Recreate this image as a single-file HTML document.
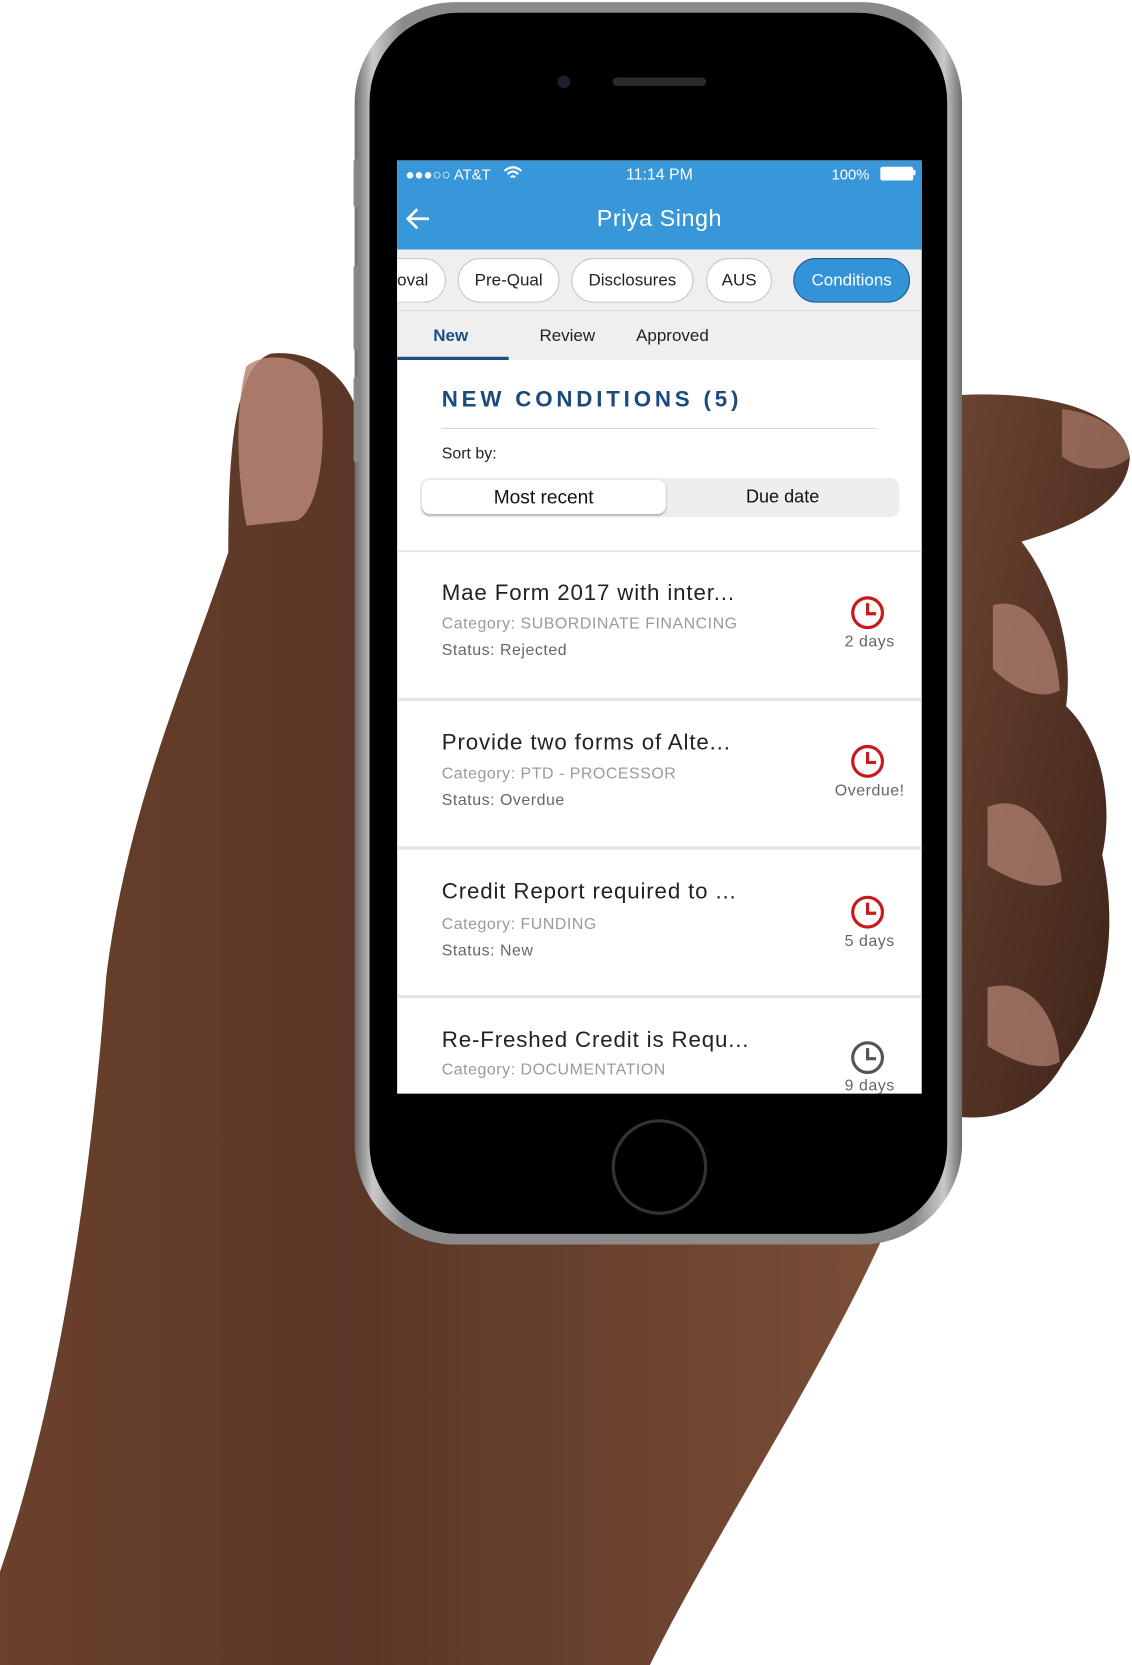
<!DOCTYPE html>
<html><head><meta charset="utf-8">
<style>
html,body{margin:0;padding:0;background:#fff;width:1132px;height:1665px;overflow:hidden}
#w{position:absolute;left:0;top:0;width:1066px;height:1568px;transform:scale(1.0619);transform-origin:0 0;font-family:"Liberation Sans",sans-serif}
.a{position:absolute}
.chip{position:absolute;top:243px;height:42px;border:1px solid #c8c8c8;border-radius:22px;background:#fff;font-size:16px;color:#222;line-height:42px;text-align:center;box-sizing:border-box}
.t{position:absolute;left:416px;font-size:21px;color:#222;letter-spacing:0.8px}
.c{position:absolute;left:416px;font-size:15px;color:#9a9a9a;letter-spacing:0.5px}
.s{position:absolute;left:416px;font-size:15px;color:#666;letter-spacing:0.5px}
.d{position:absolute;font-size:15px;color:#666;width:100px;text-align:center;left:769px;letter-spacing:0.5px}
.sep{position:absolute;left:374px;width:494px;height:3px;background:#e4e4e4}
</style></head><body><div id="w">
<svg class="a" style="left:0;top:0" width="1066" height="1568">
<defs>
<linearGradient id="g1" x1="0" y1="0" x2="1" y2="0">
<stop offset="0" stop-color="#6a412c"/><stop offset="0.4" stop-color="#5b3626"/><stop offset="1" stop-color="#7a4e37"/></linearGradient>
<linearGradient id="g2" x1="0" y1="0" x2="1" y2="1">
<stop offset="0" stop-color="#6b4330"/><stop offset="1" stop-color="#3c2218"/></linearGradient>
</defs>
<path d="M255 333 C300 328 340 360 342 420 L342 1100 L420 1168 L830 1168 C770 1300 670 1450 612 1568 L0 1568 L0 1480 C55 1320 85 1120 100 920 C120 760 175 640 215 520 C215 430 220 345 255 333 Z" fill="url(#g1)"/>
<path d="M232 345 C250 330 290 335 300 360 C310 420 300 480 280 490 L232 495 C222 440 222 380 232 345 Z" fill="#b68676" opacity="0.85"/>
<path d="M905 372 C980 368 1058 385 1064 430 C1062 480 995 500 962 510 C1000 560 1010 620 1004 665 C1040 700 1048 760 1038 805 C1050 860 1050 940 1002 1000 C980 1040 945 1055 905 1052 Z" fill="url(#g2)"/>
<path d="M935 570 C970 560 995 600 998 650 C980 660 955 650 935 630 Z" fill="#b58676" opacity="0.7"/>
<path d="M930 760 C965 745 995 780 1000 830 C980 840 955 830 930 815 Z" fill="#b58676" opacity="0.7"/>
<path d="M930 930 C965 920 995 950 998 1000 C980 1010 955 1000 930 985 Z" fill="#b58676" opacity="0.7"/>
<path d="M1000 385 C1040 390 1062 410 1064 430 C1050 445 1020 445 1000 430 Z" fill="#b58676" opacity="0.6"/>
</svg>
<!-- phone -->
<div class="a" style="left:334px;top:2px;width:572px;height:1170px;border-radius:95px;background:linear-gradient(90deg,#6d6d6d,#c9c9c9 3%,#8a8a8a 8%,#8a8a8a 92%,#c9c9c9 97%,#6d6d6d)"></div>
<div class="a" style="left:348px;top:12px;width:544px;height:1150px;border-radius:84px;background:#000"></div>
<div class="a" style="left:333px;top:150px;width:5px;height:45px;background:#888;border-radius:2px"></div>
<div class="a" style="left:333px;top:250px;width:5px;height:80px;background:#888;border-radius:2px"></div>
<div class="a" style="left:333px;top:355px;width:5px;height:80px;background:#888;border-radius:2px"></div>
<div class="a" style="left:525px;top:71px;width:12px;height:12px;border-radius:6px;background:#1a2030"></div>
<div class="a" style="left:577px;top:73px;width:88px;height:8px;border-radius:4px;background:#2a2a2a"></div>
<div class="a" style="left:576px;top:1054px;width:84px;height:84px;border-radius:50%;border:3px solid #333;box-sizing:content-box"></div>
<!-- screen -->
<div class="a" style="left:374px;top:151px;width:494px;height:879px;background:#fff;overflow:hidden">
 <div class="a" style="left:0;top:0;width:494px;height:84px;background:#3797d8"></div>
 <div class="a" style="left:8px;top:5px;font-size:14px;color:#fff">●●●○○ AT&amp;T</div>
 <svg class="a" style="left:100px;top:5px" width="18" height="14"><path d="M1 5 Q9 -2 17 5 M4 8 Q9 3 14 8 M7 11 Q9 9 11 11" stroke="#fff" stroke-width="2" fill="none"/></svg>
 <div class="a" style="left:0;width:494px;top:5px;text-align:center;font-size:15px;color:#fff">11:14 PM</div>
 <div class="a" style="left:409px;top:5px;font-size:14px;color:#fff">100%</div>
 <div class="a" style="left:455px;top:6px;width:29px;height:11px;border:1px solid #fff;background:#fff;border-radius:2px"></div>
 <div class="a" style="left:486px;top:9px;width:2px;height:5px;background:#fff"></div>
 <svg class="a" style="left:8px;top:44px" width="24" height="22"><path d="M22 11 H3 M11 2 L2 11 L11 20" stroke="#fff" stroke-width="2.5" fill="none"/></svg>
 <div class="a" style="left:0;width:494px;top:42px;text-align:center;font-size:22px;color:#fff;letter-spacing:0.5px">Priya Singh</div>
 <div class="a" style="left:0;top:84px;width:494px;height:104px;background:#efefef"></div>
 <div class="a" style="left:0;top:141px;width:494px;height:1px;background:#ddd"></div>
</div>
<div class="chip" style="left:374px;width:46px;text-align:left;padding-left:0;border-left:none;border-radius:0 22px 22px 0">oval</div>
<div class="chip" style="left:431px;width:96px">Pre-Qual</div>
<div class="chip" style="left:538px;width:115px">Disclosures</div>
<div class="chip" style="left:665px;width:62px">AUS</div>
<div class="chip" style="left:747px;width:110px;background:#3393d9;border:1px solid #1d5a8f;color:#fff">Conditions</div>
<div class="a" style="left:408px;top:308px;font-size:16px;color:#1a4f86;font-weight:bold">New</div>
<div class="a" style="left:374px;top:336px;width:105px;height:3px;background:#1a4f86"></div>
<div class="a" style="left:508px;top:308px;font-size:16px;color:#222">Review</div>
<div class="a" style="left:599px;top:308px;font-size:16px;color:#222">Approved</div>
<div class="a" style="left:416px;top:365px;font-size:21px;color:#1b4a7c;font-weight:bold;letter-spacing:3.6px">NEW CONDITIONS (5)</div>
<div class="a" style="left:416px;top:403px;width:410px;height:1px;background:#d8d8d8"></div>
<div class="a" style="left:416px;top:419px;font-size:15px;color:#222">Sort by:</div>
<div class="a" style="left:396px;top:450px;width:451px;height:37px;background:#eee;border-radius:9px"></div>
<div class="a" style="left:397px;top:452px;width:230px;height:32px;background:#fff;border-radius:8px;box-shadow:0 1px 2px #aaa;text-align:center;line-height:32px;font-size:18px;color:#111">Most recent</div>
<div class="a" style="left:627px;top:452px;width:220px;line-height:32px;text-align:center;font-size:17px;color:#111">Due date</div>
<div class="sep" style="top:518px;height:2px"></div>
<div class="t" style="top:547px">Mae Form 2017 with inter...</div>
<div class="c" style="top:579px">Category: SUBORDINATE FINANCING</div>
<div class="s" style="top:604px">Status: Rejected</div>
<div class="d" style="top:596px">2 days</div>
<div class="sep" style="top:657px"></div>
<div class="t" style="top:688px">Provide two forms of Alte...</div>
<div class="c" style="top:720px">Category: PTD - PROCESSOR</div>
<div class="s" style="top:745px">Status: Overdue</div>
<div class="d" style="top:736px">Overdue!</div>
<div class="sep" style="top:797px"></div>
<div class="t" style="top:828px">Credit Report required to ...</div>
<div class="c" style="top:862px">Category: FUNDING</div>
<div class="s" style="top:887px">Status: New</div>
<div class="d" style="top:878px">5 days</div>
<div class="sep" style="top:937px"></div>
<div class="t" style="top:968px">Re-Freshed Credit is Requ...</div>
<div class="c" style="top:999px">Category: DOCUMENTATION</div>
<div class="d" style="top:1014px">9 days</div>
<div class="a" style="left:374px;top:1030px;width:494px;height:20px;background:#000"></div>
<svg class="a" style="left:800px;top:560px" width="34" height="34"><circle cx="17" cy="17" r="14" stroke="#c81a1a" stroke-width="3" fill="none"/><path d="M17 8 V18 H25" stroke="#c81a1a" stroke-width="3" fill="none"/></svg>
<svg class="a" style="left:800px;top:700px" width="34" height="34"><circle cx="17" cy="17" r="14" stroke="#c81a1a" stroke-width="3" fill="none"/><path d="M17 8 V18 H25" stroke="#c81a1a" stroke-width="3" fill="none"/></svg>
<svg class="a" style="left:800px;top:842px" width="34" height="34"><circle cx="17" cy="17" r="14" stroke="#c81a1a" stroke-width="3" fill="none"/><path d="M17 8 V18 H25" stroke="#c81a1a" stroke-width="3" fill="none"/></svg>
<svg class="a" style="left:800px;top:979px" width="34" height="34"><circle cx="17" cy="17" r="14" stroke="#555" stroke-width="3" fill="none"/><path d="M17 8 V18 H25" stroke="#555" stroke-width="3" fill="none"/></svg>
</div></body></html>
